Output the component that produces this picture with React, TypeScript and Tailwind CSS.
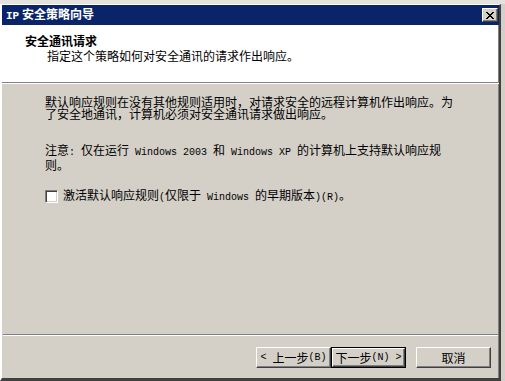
import React from 'react'

// Latin runs in SimSun are 6px-wide monospace; Liberation Mono at 10px gets close
function L({ children }: { children: React.ReactNode }) {
  return <span className="whitespace-pre font-['Liberation_Mono',monospace] text-[10px]">{children}</span>
}

function Btn({ children, isDefault, className = '' }: { children: React.ReactNode; isDefault?: boolean; className?: string }) {
  const face =
    'flex h-full w-full items-center justify-center border-t border-l border-white border-r border-b border-r-[#404040] border-b-[#404040] bg-[#d4d0c8] shadow-[inset_-1px_-1px_0_#808080] text-[12px] text-black'
  return (
    <div className={`h-[21px] w-[75px] ${isDefault ? 'border border-black' : ''} ${className}`}>
      <div className={face}>{children}</div>
    </div>
  )
}

export default function App() {
  return (
    <div className="flex h-[381px] w-[505px] flex-col overflow-hidden bg-[#d4d0c8] font-['Noto_Sans_CJK_SC',sans-serif] text-[12px] leading-[12px] text-black">
      {/* desktop strip behind the dialog */}
      <div className="h-[4px] w-full bg-[#e4e2dc]" />

      {/* ===== DIALOG ===== */}
      <div className="flex h-[377px] w-[501px] flex-col border-t border-l-2 border-white border-r-2 border-r-[#404040] border-b-[3px] border-b-[#404040] bg-[#d4d0c8] shadow-[inset_-1px_0_0_#808080]">
        {/* Title bar */}
        <div className="flex h-[20px] items-center justify-between bg-[#0a246a] pl-[4px] pr-[1px]">
          <span className="font-bold text-white">
            <span className="font-['Liberation_Mono',monospace] text-[11px] font-bold">IP</span> 安全策略向导
          </span>
          <div className="flex h-[14px] w-[16px] items-center justify-center border-t border-l border-white border-r border-b border-r-[#404040] border-b-[#404040] bg-[#d4d0c8] shadow-[inset_-1px_-1px_0_#808080]">
            <svg width="8" height="7" viewBox="0 0 8 7" shapeRendering="crispEdges">
              <path d="M0 0h2v1h-2zM6 0h2v1h-2zM1 1h2v1h-2zM5 1h2v1h-2zM2 2h4v1h-4zM3 3h2v1h-2zM2 4h4v1h-4zM1 5h2v1h-2zM5 5h2v1h-2zM0 6h2v1h-2zM6 6h2v1h-2z" fill="#000" />
            </svg>
          </div>
        </div>

        {/* Header */}
        <div className="mr-[1px] h-[57px] bg-white pl-[23px] pt-[9px]">
          <div className="font-bold leading-[13px]">安全通讯请求</div>
          <div className="mt-[2px] pl-[22px] leading-[13px]">指定这个策略如何对安全通讯的请求作出响应。</div>
        </div>
        <div className="h-[2px] border-t border-[#808080] border-b border-b-white" />

        {/* Body */}
        <div className="h-[250px] pl-[43px] pt-[12px]">
          <p className="whitespace-nowrap">
            默认响应规则在没有其他规则适用时，对请求安全的远程计算机作出响应。为
            <br />
            了安全地通讯，计算机必须对安全通讯请求做出响应。
          </p>
          <p className="mt-[24px] whitespace-nowrap">
            注意<L>: </L>仅在运行<L> Windows 2003 </L>和<L> Windows XP </L>的计算机上支持默认响应规
            <br />
            则。
          </p>
          <label className="mt-[18px] flex items-center gap-[5px] whitespace-nowrap">
            <span className="h-[13px] w-[13px] border-t border-l border-[#808080] border-r border-b border-r-white border-b-white bg-white shadow-[inset_1px_1px_0_#404040,inset_-1px_-1px_0_#d4d0c8]" />
            <span>
              激活默认响应规则<L>(</L>仅限于<L> Windows </L>的早期版本<L>)(R)</L>。
            </span>
          </label>
        </div>

        <div className="mx-[1px] h-[2px] border-t border-[#808080] border-b border-b-white" />

        {/* Footer buttons */}
        <div className="flex h-[42px] justify-end pr-[8px] pt-[11px]">
          <Btn>
            <L>&lt; </L>上一步<L>(B)</L>
          </Btn>
          <Btn isDefault>
            下一步<L>(N) &gt;</L>
          </Btn>
          <Btn className="ml-[10px]">取消</Btn>
        </div>
      </div>
    </div>
  )
}
